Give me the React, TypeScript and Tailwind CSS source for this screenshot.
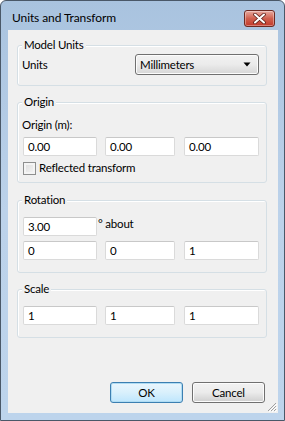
import { ReactNode } from 'react';

const font = { fontFamily: 'Lato, "Noto Sans", sans-serif' };

function GroupBox({ title, className, children }: { title: string; className: string; children: ReactNode }) {
  return (
    <div className={`relative ml-[9px] w-[250px] rounded-[3px] border border-[#d5dfe5] shadow-[inset_1px_1px_0_#ffffff] ${className}`}>
      <span className="absolute left-[4px] top-[-9px] bg-[#f0f0f0] px-[2px] leading-[16px]">{title}</span>
      {children}
    </div>
  );
}

function TextBox({ value, w, className = '' }: { value: string; w: string; className?: string }) {
  return (
    <div
      className={`flex h-[19px] items-center rounded-[2px] border border-[#dadada] border-t-[#c8c8c8] bg-white pl-[4px] leading-[16px] ${w} ${className}`}
    >
      {value}
    </div>
  );
}

function TripleRow({ values, className = '' }: { values: string[]; className?: string }) {
  return (
    <div className={`flex pl-[5px] ${className}`}>
      <TextBox value={values[0]} w="w-[74px]" />
      <TextBox value={values[1]} w="w-[70px]" className="ml-[8px]" />
      <TextBox value={values[2]} w="w-[75px]" className="ml-[9px]" />
    </div>
  );
}

export default function App() {
  return (
    <div className="h-[421px] w-[285px] text-[11.5px] tracking-[-0.2px] text-black" style={font}>
      <div className="flex h-full flex-col rounded-t-[6px] border border-[#4a5868] bg-gradient-to-b from-[#a9c3df] via-[#bcd2ea] to-[#bdd4ec]">
        {/* title bar */}
        <div className="flex h-[29px] shrink-0 items-start">
          <span className="ml-[11px] mt-[9px] text-[12px] leading-[16px] tracking-[-0.1px]">Units and Transform</span>
          <div className="ml-auto mr-[9px] mt-[9px] flex h-[17px] w-[31px] items-center justify-center rounded-[3px] border border-[#6d2a22] bg-gradient-to-b from-[#e6a99f] via-[#d0604f] to-[#c2382a] shadow-[inset_0_0_0_1px_rgba(255,255,255,0.35)]">
            <svg width="13" height="11" viewBox="0 0 13 11">
              <path d="M2 1.5 L11 9.5 M11 1.5 L2 9.5" stroke="#5a1d16" strokeWidth="3.6" strokeLinecap="round" />
              <path d="M2 1.5 L11 9.5 M11 1.5 L2 9.5" stroke="#ffffff" strokeWidth="2" strokeLinecap="round" />
            </svg>
          </div>
        </div>

        {/* client area */}
        <div className="relative mb-[7px] ml-[7px] mr-[6px] flex flex-1 flex-col bg-[#f0f0f0]">
          <GroupBox title="Model Units" className="mt-[15px] h-[41px]">
            <div className="flex items-center pl-[4px] pr-[7px] pt-[8px]">
              <span className="leading-[16px]">Units</span>
              <div className="ml-auto flex h-[21px] w-[124px] items-center rounded-[3px] border border-[#707070] bg-gradient-to-b from-[#f2f2f2] via-[#ebebeb] to-[#d6d6d6] pl-[4px] pr-[7px] shadow-[inset_0_0_0_1px_#fcfcfc]">
                <span className="leading-[16px]">Millimeters</span>
                <svg className="ml-auto" width="8" height="5" viewBox="0 0 8 5">
                  <path d="M0.5 0.5 H7.5 L4 4.5 Z" fill="#000" />
                </svg>
              </div>
            </div>
          </GroupBox>

          <GroupBox title="Origin" className="mt-[16px] h-[81px]">
            <div className="pl-[4px] pt-[14px] leading-[16px]">Origin (m):</div>
            <TripleRow values={['0.00', '0.00', '0.00']} className="mt-[4px]" />
            <div className="mt-[4px] flex h-[16px] items-center pl-[5px]">
              <div className="h-[13px] w-[13px] border border-[#8e8f8f] bg-gradient-to-br from-[#dcdcdc] to-[#f6f6f6] shadow-[inset_0_0_0_2px_#f4f4f4]" />
              <span className="ml-[3px] leading-[16px]">Reflected transform</span>
            </div>
          </GroupBox>

          <GroupBox title="Rotation" className="mt-[17px] h-[73px]">
            <div className="flex items-start pl-[5px] pt-[16px]">
              <TextBox value="3.00" w="w-[74px]" />
              <span className="ml-[1px] mt-[-1px] leading-[16px]">° about</span>
            </div>
            <TripleRow values={['0', '0', '1']} className="mt-[5px]" />
          </GroupBox>

          <GroupBox title="Scale" className="mt-[16px] h-[49px]">
            <TripleRow values={['1', '1', '1']} className="pt-[16px]" />
          </GroupBox>

          <div className="mt-auto flex justify-end gap-[9px] pb-[10px] pr-[13px]">
            <div className="flex h-[21px] w-[73px] items-center justify-center rounded-[3px] border border-[#3c7fb1] bg-gradient-to-b from-[#eaf6fd] via-[#d9f0fc] to-[#bee6fd] shadow-[inset_0_0_0_1px_#b0dcf3]">
              OK
            </div>
            <div className="flex h-[21px] w-[73px] items-center justify-center rounded-[3px] border border-[#707070] bg-gradient-to-b from-[#f2f2f2] via-[#ebebeb] to-[#cfcfcf] shadow-[inset_0_0_0_1px_#fcfcfc]">
              Cancel
            </div>
          </div>

          <svg className="absolute bottom-[1px] right-[1px]" width="11" height="11" viewBox="0 0 11 11">
            <path d="M10 2 L2 10 M10 5 L5 10 M10 8 L8 10" stroke="#a0a0a0" strokeWidth="1" />
            <path d="M11 3 L3 11 M11 6 L6 11 M11 9 L9 11" stroke="#ffffff" strokeWidth="1" />
          </svg>
        </div>
      </div>
    </div>
  );
}
